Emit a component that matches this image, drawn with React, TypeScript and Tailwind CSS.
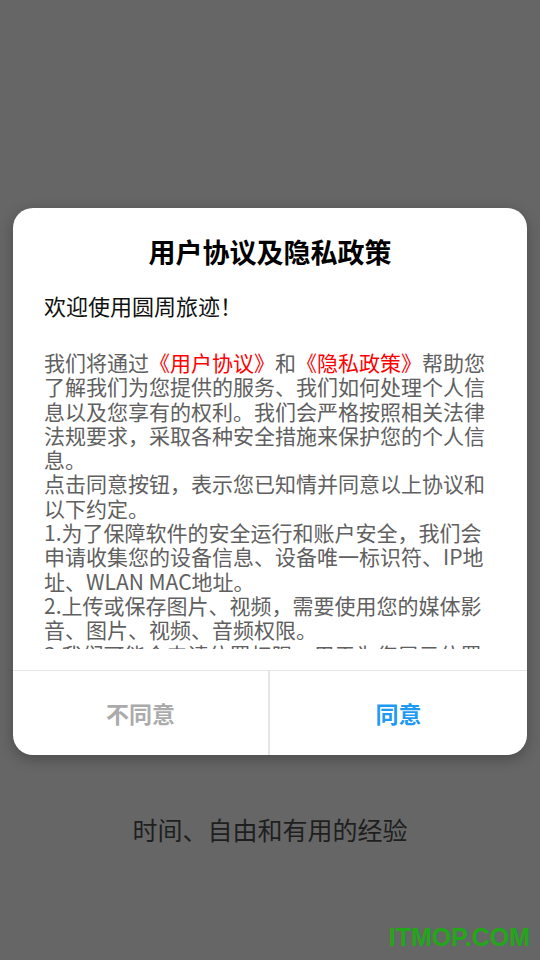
import React from "react";

const font = { fontFamily: '"Noto Sans CJK SC", "Noto Sans", sans-serif' };

export default function App() {
  return (
    <div className="relative w-full min-h-[960px] bg-[#666666] flex flex-col items-center" style={font}>
      <div className="mt-[208px] w-[514px] bg-white rounded-[20px] overflow-hidden shadow-[0_4px_14px_rgba(0,0,0,0.28)] flex flex-col">
        <div className="pt-[24px] text-center text-[27px] leading-[40px] font-bold text-black">
          用户协议及隐私政策
        </div>
        <div className="mt-[18px] pl-[31px] text-[22px] leading-[30px] text-[#111111]">
          欢迎使用圆周旅迹！
        </div>
        <div className="mt-[30px] h-[299px] overflow-hidden pl-[31px] pr-[38px] text-[21px] leading-[24.3px] text-[#606060]">
          <p>
            我们将通过<span className="text-[#ff0000]">《用户协议》</span>和<span className="text-[#ff0000]">《隐私政策》</span>帮助您了解我们为您提供的服务、我们如何处理个人信息以及您享有的权利。我们会严格按照相关法律法规要求，采取各种安全措施来保护您的个人信息。
          </p>
          <p>点击同意按钮，表示您已知情并同意以上协议和以下约定。</p>
          <p>1.为了保障软件的安全运行和账户安全，我们会申请收集您的设备信息、设备唯一标识符、IP地址、WLAN MAC地址。</p>
          <p>2.上传或保存图片、视频，需要使用您的媒体影音、图片、视频、音频权限。</p>
          <p>3.我们可能会申请位置权限，用于为您展示位置相关的内容。</p>
        </div>
        <div className="mt-[21px] border-t border-[#e6e6e6] grid grid-cols-2 h-[85px]">
          <button className="flex items-center justify-center text-[23px] font-bold text-[#ababab] border-r-2 border-[#e6e6e6]">
            不同意
          </button>
          <button className="flex items-center justify-center text-[23px] font-bold text-[#1e9af2]">
            同意
          </button>
        </div>
      </div>
      <div className="mt-[59px] text-[25px] leading-[30px] text-[#1f1f1f]">时间、自由和有用的经验</div>
      <div
        className="absolute right-[10px] top-[925px] text-[25px] leading-none font-bold text-[#22a61a]"
        style={{ fontFamily: '"Liberation Sans", Arial, sans-serif' }}
      >
        ITMOP.COM
      </div>
    </div>
  );
}
